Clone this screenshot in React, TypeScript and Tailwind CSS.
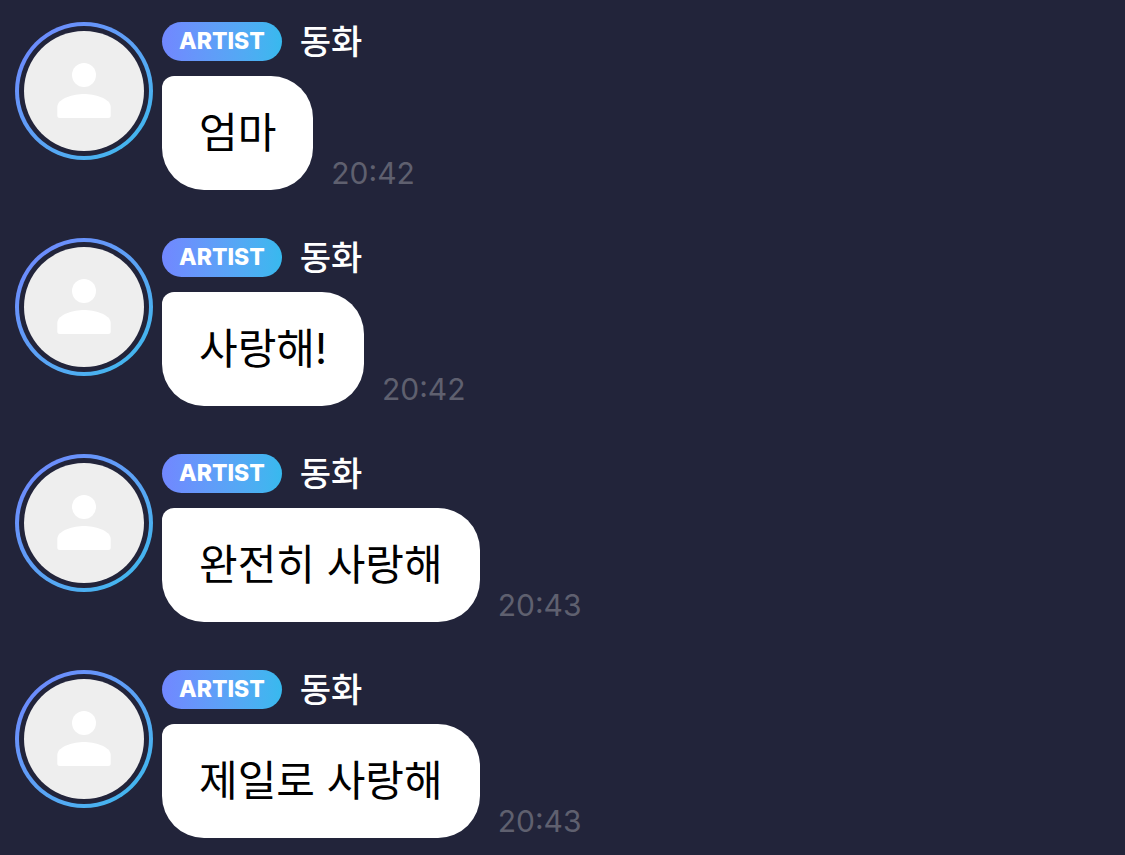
type Message = {
    id: number;
    artist: string;
    text: string;
    time: string;
};

const messages: Message[] = [
    { id: 1, artist: "동화", text: "엄마", time: "20:42" },
    { id: 2, artist: "동화", text: "사랑해!", time: "20:42" },
    { id: 3, artist: "동화", text: "완전히 사랑해", time: "20:43" },
    { id: 4, artist: "동화", text: "제일로 사랑해", time: "20:43" },
];

const Avatar = () => (
    <div className="size-[138px] shrink-0 rounded-full bg-linear-to-br from-[#7183ff] to-[#35bdec] p-1">
        <div className="size-full rounded-full bg-[#22243a] p-[5px]">
            <svg viewBox="0 0 120 120" className="size-full rounded-full bg-[#eeeeee]" aria-hidden="true">
                <circle cx="60" cy="44" r="12" fill="#fff" />
                <path
                    d="M33.3 76C33.3 67.3 50 63 60 63S86.7 67.3 86.7 76V84.5Q86.7 87 84.2 87H35.8Q33.3 87 33.3 84.5Z"
                    fill="#fff"
                />
            </svg>
        </div>
    </div>
);

const MessageItem = ({ message }: { message: Message }) => (
    <li className="flex items-start gap-[9px]">
        <Avatar />
        <div className="min-w-0">
            <div className="flex h-[39px] items-center gap-[18px]">
                <span className="flex h-full items-center rounded-full bg-linear-to-r from-[#7187ff] to-[#37b9ee] px-[17px] text-[23px] font-extrabold text-white">
                    ARTIST
                </span>
                <span className="text-[34px] leading-none font-medium text-white">{message.artist}</span>
            </div>
            <div className="mt-[15px] flex items-end gap-[18px]">
                <p className="rounded-[42px] rounded-tl-[12px] bg-white px-[37px] py-7 text-[42px] leading-[58px] text-black">
                    {message.text}
                </p>
                <time className="text-[30px] leading-[34px] text-[#5f606f]">{message.time}</time>
            </div>
        </div>
    </li>
);

const App = () => {
    return (
        <main className="min-h-screen bg-[#22243a] px-[15px] pt-[22px] pb-4 font-['Inter','Noto_Sans_CJK_KR',sans-serif]">
            <ul className="flex flex-col gap-12">
                {messages.map((message) => (
                    <MessageItem key={message.id} message={message} />
                ))}
            </ul>
        </main>
    );
};

export default App;
